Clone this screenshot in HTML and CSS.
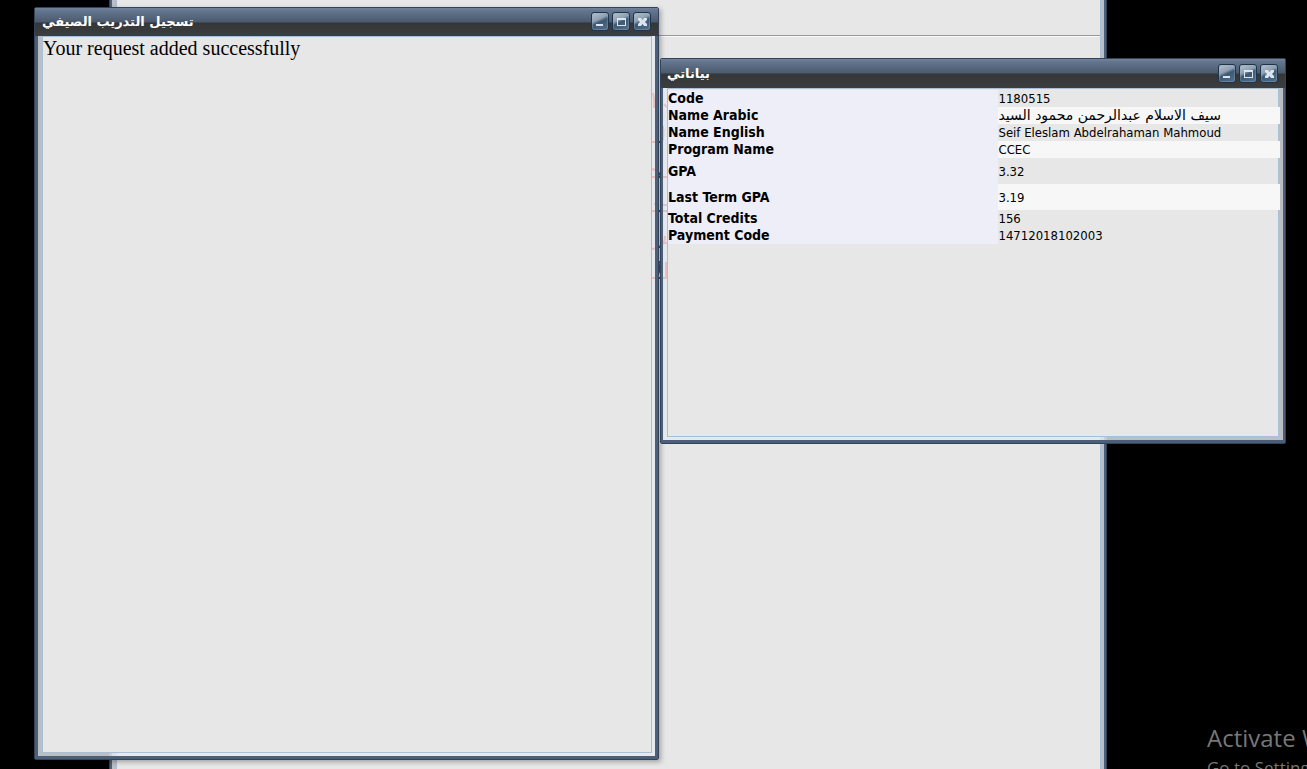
FILE: index.html
```html
<!DOCTYPE html>
<html lang="en">
<head>
<meta charset="utf-8">
<title>Student Portal</title>
<link rel="stylesheet" href="styles.css">
</head>
<body>
<main class="desktop">
  <section class="window window-back">
    <div class="frame"><div class="content"><hr class="rule"></div></div>
  </section>
  <svg class="watermark" viewBox="0 0 16 192" aria-hidden="true"><path d="M1 3q2 8 1 15M12 14q2 3 4 3M0 52h10q2-4 1-16M0 87h16M0 79q5 1 9 7M0 121h16M2 114h3m6 1h4M0 159q13-1 13-13M11 153h5M0 188h15M5 187q4-8 3-16M14 172v16"/></svg>

  <section class="window window-training">
    <header class="titlebar">
      <h2 class="title" lang="ar" dir="rtl">تسجيل التدريب الصيفي</h2>
      <div class="controls">
        <button class="control" type="button" aria-label="Minimize"><svg viewBox="0 0 18 18"><path d="M5 11h7v2H5z"/></svg></button>
        <button class="control" type="button" aria-label="Maximize"><svg viewBox="0 0 18 18"><path fill-rule="evenodd" d="M5 5h9v8H5zM6 7v5h7V7z"/></svg></button>
        <button class="control" type="button" aria-label="Close"><svg viewBox="0 0 18 18"><path d="M5 5h3l1.500 2L11 5h3v2l-2 2 2 2v2h-3l-1.500-2L8 13H5v-2l2-2-2-2z"/></svg></button>
      </div>
    </header>
    <div class="frame"><div class="content"><p class="message">Your request added successfully</p></div></div>
  </section>

  <section class="window window-data">
    <header class="titlebar">
      <h2 class="title" lang="ar" dir="rtl">بياناتي</h2>
      <div class="controls">
        <button class="control" type="button" aria-label="Minimize"><svg viewBox="0 0 18 18"><path d="M5 11h7v2H5z"/></svg></button>
        <button class="control" type="button" aria-label="Maximize"><svg viewBox="0 0 18 18"><path fill-rule="evenodd" d="M5 5h9v8H5zM6 7v5h7V7z"/></svg></button>
        <button class="control" type="button" aria-label="Close"><svg viewBox="0 0 18 18"><path d="M5 5h3l1.500 2L11 5h3v2l-2 2 2 2v2h-3l-1.500-2L8 13H5v-2l2-2-2-2z"/></svg></button>
      </div>
    </header>
    <div class="frame"><div class="content">
      <table class="details">
        <tr><th scope="row">Code</th><td>1180515</td></tr>
        <tr class="striped"><th scope="row">Name Arabic</th><td class="arabic" lang="ar">سيف الاسلام عبدالرحمن محمود السيد</td></tr>
        <tr><th scope="row">Name English</th><td>Seif Eleslam Abdelrahaman Mahmoud</td></tr>
        <tr class="striped"><th scope="row">Program Name</th><td>CCEC</td></tr>
        <tr class="tall"><th scope="row">GPA</th><td>3.32</td></tr>
        <tr class="tall striped"><th scope="row">Last Term GPA</th><td>3.19</td></tr>
        <tr><th scope="row">Total Credits</th><td>156</td></tr>
        <tr><th scope="row">Payment Code</th><td>14712018102003</td></tr>
      </table>
    </div></div>
  </section>

  <aside class="activation"><p class="activation-title">Activate Windows</p><p class="activation-hint">Go to Settings to activate Windows.</p></aside>
</main>
</body>
</html>
```
FILE: styles.css
```css
* { box-sizing: border-box; }
body { margin: 0; background: #000; }
h2, p { margin: 0; }

.desktop {
  position: relative;
  height: 100vh;
  overflow: hidden;
  font-family: "DejaVu Sans Condensed", "DejaVu Sans", sans-serif;
}

/* Windows */
.window {
  position: absolute;
  display: flex;
  flex-direction: column;
  border: 1px solid #33435a;
  border-radius: 2px;
}
.window-back { left: 109px; top: -60px; width: 998px; height: 900px; }
.window-training {
  left: 34px; top: 7px; width: 625px; height: 753px;
  box-shadow: 2px 2px 5px rgba(0, 0, 0, .3);
}
.window-data { left: 660px; top: 58px; width: 626px; height: 386px; }

.frame {
  flex: 1;
  display: flex;
  min-height: 0;
  padding: 0 4px 3px;
  border: 2px solid #4c5f78;
  border-top: 0;
  border-bottom-width: 3px;
  background: rgba(228, 232, 238, .82);
  background-clip: padding-box;
}
.window-back .frame { padding-right: 3px; }
.window-training .frame { border-left-width: 3px; border-right-width: 3px; padding-right: 3px; }
.content {
  flex: 1;
  min-width: 0;
  background: #e7e7e7;
  border: 1px solid #a9bfd5;
}
.window-back .content { padding-top: 93px; }
.rule {
  margin: 0;
  border: 0;
  border-top: 1px solid #999;
  border-bottom: 1px solid #f8f8f8;
}

.titlebar {
  display: flex;
  justify-content: space-between;
  height: 28px;
  padding: 4px 7px 0;
  background: linear-gradient(#718299, #63758e 3px, #4b5a6d 14px, #343638 15px, #3c3d3f);
}
.window-data .titlebar { height: 29px; padding: 5px 7px 0 6px; }
.title {
  color: #fff;
  font: bold 13px/20px "DejaVu Sans", sans-serif;
}
.controls { display: flex; gap: 3px; }
.control {
  width: 18px;
  height: 19px;
  padding: 0;
  border: 1px solid #1d344d;
  border-radius: 3px;
  background: linear-gradient(155deg, #b7c0ca, #8fa0b1 38%, #3c5873 52%, #58718c);
  box-shadow: inset 0 0 0 1px rgba(150, 175, 200, .35);
}
.control svg { display: block; width: 18px; height: 18px; margin: -1px; fill: #dbe5ef; }

.message { font: 20px/23px "Liberation Serif", serif; }

/* Student details */
.details {
  width: calc(100% + 2px);
  table-layout: fixed;
  border-collapse: collapse;
  line-height: 17px;
}
.details th, .details td { height: 17px; padding: 0; text-align: left; white-space: nowrap; }
.details th { width: 54%; background: #eeeef9; font-size: 14px; }
.details td { font-size: 13px; }
.details .arabic { font: 14px/17px "DejaVu Sans", sans-serif; }
.details .striped td { background: #f7f7f7; }
.details .tall { height: 26px; }
.window-data .content { padding-top: 1px; }

/* Red strokes on the page behind the windows */
.watermark {
  position: absolute;
  left: 652px; top: 90px;
  width: 16px;
  height: 192px;
  fill: none;
  stroke: #f00;
  stroke-width: 2;
}

.activation {
  position: absolute;
  left: 1207px; top: 722px;
  color: #777;
  font-family: "Open Sans", sans-serif;
  white-space: nowrap;
}
.activation-title { font-size: 24px; line-height: 32px; }
.activation-hint { font-size: 17px; line-height: 28px; }
```
